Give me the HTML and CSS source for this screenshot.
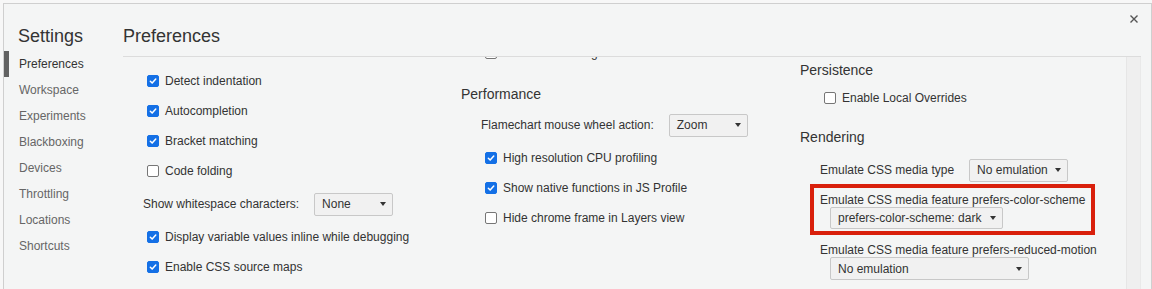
FILE: index.html
```html
<!DOCTYPE html>
<html>
<head>
<meta charset="utf-8">
<link rel="stylesheet" href="styles.css">
</head>
<body>
<div class="dialog">
  <aside class="sidebar">
    <div class="sidebar-title">Settings</div>
    <nav class="nav">
      <div class="nav-item selected">Preferences</div>
      <div class="nav-item">Workspace</div>
      <div class="nav-item">Experiments</div>
      <div class="nav-item">Blackboxing</div>
      <div class="nav-item">Devices</div>
      <div class="nav-item">Throttling</div>
      <div class="nav-item">Locations</div>
      <div class="nav-item">Shortcuts</div>
    </nav>
  </aside>
  <main class="main">
    <header class="main-header">Preferences</header>
    <div class="body">
      <div class="scroll">
        <div class="col col1">
          <div class="row"><span class="cb"></span></div>
          <div class="row"><span class="cb checked"><svg viewBox="0 0 12 12"><path d="M2.8 6.3 L5 8.5 L9.3 3.6"/></svg></span><span>Detect indentation</span></div>
          <div class="row"><span class="cb checked"><svg viewBox="0 0 12 12"><path d="M2.8 6.3 L5 8.5 L9.3 3.6"/></svg></span><span>Autocompletion</span></div>
          <div class="row"><span class="cb checked"><svg viewBox="0 0 12 12"><path d="M2.8 6.3 L5 8.5 L9.3 3.6"/></svg></span><span>Bracket matching</span></div>
          <div class="row"><span class="cb"></span><span>Code folding</span></div>
          <div class="select-row"><span class="select-label">Show whitespace characters:</span><div class="select w79"><span>None</span><span class="arrow"></span></div></div>
          <div class="row"><span class="cb checked"><svg viewBox="0 0 12 12"><path d="M2.8 6.3 L5 8.5 L9.3 3.6"/></svg></span><span>Display variable values inline while debugging</span></div>
          <div class="row"><span class="cb checked"><svg viewBox="0 0 12 12"><path d="M2.8 6.3 L5 8.5 L9.3 3.6"/></svg></span><span>Enable CSS source maps</span></div>
        </div>
        <div class="col col2">
          <div class="row"><span class="cb"></span><span>Force ad blocking on this site</span></div>
          <div class="section-title spaced">Performance</div>
          <div class="select-row"><span class="select-label">Flamechart mouse wheel action:</span><div class="select w79"><span>Zoom</span><span class="arrow"></span></div></div>
          <div class="row"><span class="cb checked"><svg viewBox="0 0 12 12"><path d="M2.8 6.3 L5 8.5 L9.3 3.6"/></svg></span><span>High resolution CPU profiling</span></div>
          <div class="row"><span class="cb checked"><svg viewBox="0 0 12 12"><path d="M2.8 6.3 L5 8.5 L9.3 3.6"/></svg></span><span>Show native functions in JS Profile</span></div>
          <div class="row"><span class="cb"></span><span>Hide chrome frame in Layers view</span></div>
        </div>
        <div class="col col3">
          <div class="section-title first">Persistence</div>
          <div class="row"><span class="cb"></span><span>Enable Local Overrides</span></div>
          <div class="section-title rendering">Rendering</div>
          <div class="select-row"><span class="select-label">Emulate CSS media type</span><div class="select w99"><span>No emulation</span><span class="arrow"></span></div></div>
          <div class="feature highlight">
            <div class="feature-label">Emulate CSS media feature prefers-color-scheme</div>
            <div class="select w173"><span>prefers-color-scheme: dark</span><span class="arrow"></span></div>
          </div>
          <div class="feature">
            <div class="feature-label">Emulate CSS media feature prefers-reduced-motion</div>
            <div class="select w199"><span>No emulation</span><span class="arrow"></span></div>
          </div>
        </div>
      </div>
      <div class="scrollbar"></div>
    </div>
  </main>
  <button class="close" aria-label="Close"><svg viewBox="0 0 10 10"><path d="M1.5 1.5 L8.5 8.5 M8.5 1.5 L1.5 8.5"/></svg></button>
</div>
</body>
</html>
```

FILE: styles.css
```css
* { box-sizing: border-box; }

html, body {
  margin: 0;
  height: 289px;
  overflow: hidden;
}

body {
  background: #f7f7f7;
  font-family: "Liberation Sans", Arial, Helvetica, sans-serif;
  font-size: 12px;
  color: #333;
}

.dialog {
  position: relative;
  margin: 3px 0 0 3px;
  width: 1149px;
  height: 300px;
  background: #f4f5f5;
  border: 1px solid #cfcfcf;
  display: flex;
}

.sidebar {
  width: 119px;
  flex: none;
  padding-top: 21px;
}

.sidebar-title {
  font-size: 18px;
  line-height: 22px;
  padding-left: 14px;
  color: #333;
}

.nav {
  margin-top: 4px;
}

.nav-item {
  height: 26px;
  line-height: 26px;
  padding-left: 10px;
  border-left: 5px solid transparent;
  color: #666;
}

.nav-item.selected {
  border-left-color: #626262;
  color: #333;
}

.main {
  flex: 1;
  min-width: 0;
  padding-right: 10px;
  display: flex;
  flex-direction: column;
}

.main-header {
  font-size: 18px;
  line-height: 22px;
  padding: 21px 0 9px 0;
  border-bottom: 1px solid #dcdcdc;
  color: #333;
}

.body {
  flex: 1;
  display: flex;
  min-height: 0;
}

.scroll {
  flex: 1;
  display: grid;
  grid-template-columns: 338px 339px 1fr;
  align-items: start;
  overflow: hidden;
  border-right: 1px solid #e6e6e6;
}

.scrollbar {
  width: 14px;
  flex: none;
  background: #efefef;
  border-right: 1px solid #e9e9e9;
}

.col1 { margin-top: -22px; }
.col2 { margin-top: -20px; }

.row {
  height: 30px;
  display: flex;
  align-items: center;
  padding-left: 24px;
  padding-top: 2px;
  white-space: nowrap;
}

.cb {
  width: 12px;
  height: 12px;
  flex: none;
  margin-right: 6px;
  border: 1px solid #767676;
  border-radius: 2px;
  background: #fff;
  display: flex;
  align-items: center;
  justify-content: center;
}

.cb.checked {
  background: #1470e6;
  border-color: #1470e6;
}

.cb svg {
  width: 12px;
  height: 12px;
  fill: none;
  stroke: #fff;
  stroke-width: 1.8;
  stroke-linecap: round;
  stroke-linejoin: round;
}

.select-row {
  height: 36px;
  display: flex;
  align-items: center;
  padding-left: 20px;
  padding-top: 2px;
  white-space: nowrap;
}

.select-label {
  margin-right: 15px;
}

.select {
  height: 23px;
  display: flex;
  align-items: center;
  justify-content: space-between;
  padding: 0 6px 0 7px;
  background: #f1f1f1;
  border: 1px solid #c8c8c8;
  border-radius: 2px;
  white-space: nowrap;
  color: #333;
}

.w79 { width: 79px; }
.w99 { width: 99px; }
.w173 { width: 173px; }
.w199 { width: 199px; }

.arrow {
  width: 0;
  height: 0;
  border-left: 3.5px solid transparent;
  border-right: 3.5px solid transparent;
  border-top: 4px solid #333;
}

.section-title {
  font-size: 14px;
  line-height: 18px;
  padding-top: 4px;
  margin-bottom: 4px;
  color: #333;
}

.section-title.spaced { margin-top: 14px; margin-bottom: 3px; }
.section-title.first { padding-top: 4px; margin-bottom: 3px; }
.section-title.rendering { margin-top: 12px; margin-bottom: 5px; }

.feature {
  padding-left: 20px;
  margin-top: 12px;
}

.feature.highlight {
  position: relative;
  margin-top: 4px;
}

.feature-label {
  height: 16px;
  line-height: 14px;
  padding-top: 2px;
  white-space: nowrap;
}

.feature .select {
  margin-left: 10px;
}

.feature.highlight .select {
  height: 22px;
}

.highlight::after {
  content: "";
  position: absolute;
  top: -7px;
  bottom: -6px;
  left: 10px;
  right: 31px;
  border: 4px solid #d9200c;
  pointer-events: none;
}

.close {
  position: absolute;
  top: 10px;
  right: 12px;
  width: 10px;
  height: 10px;
  padding: 0;
  border: none;
  background: transparent;
  display: flex;
}

.close svg {
  width: 10px;
  height: 10px;
  fill: none;
  stroke: #555;
  stroke-width: 1.4;
}
```
